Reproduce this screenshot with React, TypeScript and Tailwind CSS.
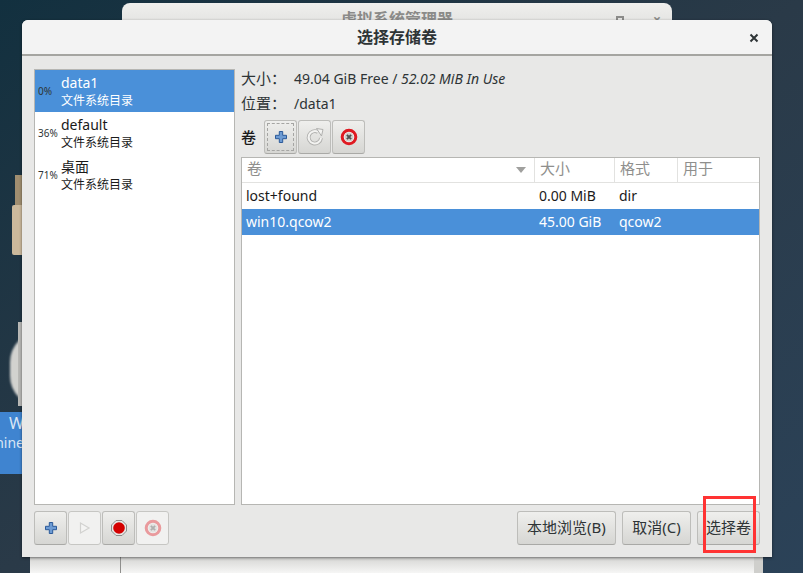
const font = "font-['Noto_Sans','Noto_Sans_CJK_SC',sans-serif]";

function PlusIcon() {
    return (
        <svg width="14" height="14" viewBox="0 0 14 14">
            <path
                d="M5.300 1.500h3.400v3.800h3.800v3.400H8.700v3.800H5.300V8.700H1.500V5.300h3.800z"
                fill="#6d9bd3"
                stroke="#2c5a99"
                strokeWidth="1"
                strokeLinejoin="round"
            />
        </svg>
    );
}

function RefreshIcon() {
    return (
        <svg width="20" height="20" viewBox="0 0 20 20">
            <path d="M16 11a6.200 6.200 0 1 1-3-6" fill="none" stroke="#b0b0ae" strokeWidth="3.800" />
            <path d="M16 11a6.200 6.200 0 1 1-3-6" fill="none" stroke="#f3f3f1" strokeWidth="2" />
            <path d="M11.500 1.500l6.500 1-1.500 6.500z" fill="#f3f3f1" stroke="#b0b0ae" strokeWidth="1" strokeLinejoin="round" />
        </svg>
    );
}

function DeleteIcon({ faded }: { faded?: boolean }) {
    return (
        <svg width="18" height="18" viewBox="0 0 18 18" className={faded ? "opacity-40" : ""}>
            <circle cx="9" cy="9" r="6.800" fill="#f4f4f2" stroke="#df1a22" strokeWidth="3" />
            <circle cx="9" cy="9" r="4.500" fill="#cfcfcd" />
            <path d="M6.900 6.900l4.200 4.200M11.100 6.900l-4.200 4.200" stroke="#505050" strokeWidth="2" />
        </svg>
    );
}

function PlayIcon() {
    return (
        <svg width="12" height="14" viewBox="0 0 12 14">
            <path d="M1.500 2v10l8.500-5z" fill="#f4f4f3" stroke="#d2d2d0" strokeWidth="1.200" />
        </svg>
    );
}

function RecordIcon() {
    return (
        <svg width="16" height="16" viewBox="0 0 16 16">
            <path
                d="M5 .5h6L15.500 5v6L11 15.500H5L.5 11V5z"
                fill="#e8e8e6"
                stroke="#8c8c8a"
                strokeWidth="1"
            />
            <circle cx="8" cy="8" r="5.800" fill="#d40000" />
        </svg>
    );
}

function IconButton({
    children,
    disabled,
    focused,
}: {
    children: React.ReactNode;
    disabled?: boolean;
    focused?: boolean;
}) {
    return (
        <div
            className={`relative flex h-[34px] w-[33px] items-center justify-center rounded-[3px] border ${
                disabled
                    ? "border-[#c6c6c3] bg-[#f1f1f0]"
                    : "border-[#bdbdba] border-b-[#a9a9a6] bg-gradient-to-b from-[#efefed] to-[#d6d6d3]"
            }`}
        >
            {focused && <div className="absolute inset-[2px] border border-dashed border-[#a5a5a3]" />}
            {children}
        </div>
    );
}

function TextButton({ label, width }: { label: string; width: string }) {
    return (
        <div
            className={`flex h-[34px] items-center justify-center rounded-[3px] border border-[#bdbdba] border-b-[#a9a9a6] bg-gradient-to-b from-[#efefed] to-[#d6d6d3] pb-[2px] text-[15px] text-[#2e3436] ${width}`}
        >
            {label}
        </div>
    );
}

function PoolRow({
    percent,
    name,
    selected,
}: {
    percent: string;
    name: string;
    selected?: boolean;
}) {
    return (
        <div className={`flex h-[42px] items-center ${selected ? "bg-[#4a90d9] text-white" : "text-[#1a1a1a]"}`}>
            <div className="w-[26px] pl-[3px] text-[10px] text-[#2e3436]">{percent}</div>
            <div className="flex flex-col">
                <span className="text-[14px] leading-[18px]">{name}</span>
                <span className="pt-px text-[12px] leading-[16px]">文件系统目录</span>
            </div>
        </div>
    );
}

function HeaderCell({ label, width, arrow }: { label: string; width: string; arrow?: boolean }) {
    return (
        <div className={`flex items-center justify-between border-r border-[#e2e2e0] pb-[3px] pl-[5px] pr-[8px] text-[15px] text-[#8f8f8d] last:border-r-0 ${width}`}>
            <span>{label}</span>
            {arrow && <div className="mt-[3px] h-0 w-0 border-x-[5px] border-t-[6px] border-x-transparent border-t-[#a0a09e]" />}
        </div>
    );
}

function VolumeRow({
    name,
    size,
    format,
    selected,
}: {
    name: string;
    size: string;
    format: string;
    selected?: boolean;
}) {
    return (
        <div className={`flex h-[26px] items-center pb-[2px] text-[14px] ${selected ? "bg-[#4a90d9] text-white" : "text-[#1a1a1a]"}`}>
            <div className="w-[293px] pl-[4px]">{name}</div>
            <div className="w-[80px] pl-[4px]">{size}</div>
            <div className="w-[63px] pl-[4px]">{format}</div>
        </div>
    );
}

export default function App() {
    return (
        <div className={`relative h-[573px] w-[803px] overflow-hidden bg-gradient-to-br from-[#12303f] via-[#2a3a48] to-[#2b4258] ${font}`}>
            {/* bits of the desktop behind the dialog */}
            <div className="absolute left-[15px] top-[175px] h-[35px] w-[10px] bg-[#a08e70]" />
            <div className="absolute left-[12px] top-[205px] h-[50px] w-[12px] rounded-l-[2px] bg-[#cbb99c]" />
            <div className="absolute left-[10px] top-[332px] h-[74px] w-[60px] rounded-full bg-[#d2d2cf] blur-[1px]" />
            <div className="absolute left-[18px] top-[322px] h-[84px] w-[6px] bg-[#b9b9b6]" />
            <div className="absolute left-0 top-[412px] flex h-[62px] w-[24px] flex-col items-end overflow-hidden bg-[#3f84d0] pt-[2px] text-[14px] leading-[19px] text-[#d9e6f5]">
                <span className="text-[16px]">W</span>
                <span className="whitespace-nowrap">nine</span>
            </div>

            {/* window behind */}
            <div className="absolute left-[122px] top-[3px] h-[60px] w-[550px] rounded-t-[8px] bg-gradient-to-b from-[#efefed] to-[#cfcfcd]">
                <div className="pt-[4px] text-center text-[16px] font-bold text-[#8b8b89]">虚拟系统管理器</div>
                <div className="absolute right-[11px] top-[6px] text-[14px] font-bold text-[#8b8b89]">×</div>
                <div className="absolute right-[48px] top-[13px] h-[8px] w-[8px] border-2 border-[#8b8b89]" />
            </div>
            <div className="absolute left-[30px] top-[557px] flex h-[16px] w-[733px] bg-[#f6f6f5]">
                <div className="w-[91px] border-r border-[#8f8f8d] bg-gradient-to-b from-[#d5d5d3] to-[#f6f6f5]" />
                <div className="flex-1 bg-gradient-to-b from-[#d5d5d3] to-[#f6f6f5]" />
                <div className="w-[9px] bg-[#cfcfcc]" />
            </div>

            {/* dialog */}
            <div className="absolute left-[22px] top-[20px] flex h-[537px] w-[750px] flex-col overflow-hidden rounded-t-[6px] bg-[#e8e8e7] shadow-[0_1px_3px_rgba(0,0,0,0.5)]">
                <div className="relative flex h-[36px] items-center justify-center border-b-2 border-[#a5a5a1] bg-[#f3f3f3] text-[16px] font-bold text-[#2e3436]">
                    选择存储卷
                    <svg className="absolute right-[13px] top-[13px]" width="10" height="10" viewBox="0 0 10 10">
                        <path d="M1.500 1.500l7 7M8.500 1.500l-7 7" stroke="#2e3436" strokeWidth="2" />
                    </svg>
                </div>
                <div className="flex flex-1 flex-col px-[12px] pt-[13px]">
                    <div className="flex gap-[6px]">
                        <div className="h-[436px] w-[201px] border border-[#b6b6b3] bg-white">
                            <PoolRow percent="0%" name="data1" selected />
                            <PoolRow percent="36%" name="default" />
                            <PoolRow percent="71%" name="桌面" />
                        </div>
                        <div className="flex h-[436px] flex-1 flex-col text-[14px] text-[#2e3436]">
                            <div className="flex h-[19px] items-center">
                                <span className="w-[53px] text-[15px]">大小：</span>
                                <span>
                                    49.04 GiB Free / <i>52.02 MiB In Use</i>
                                </span>
                            </div>
                            <div className="mt-[6px] flex h-[19px] items-center">
                                <span className="w-[53px] text-[15px]">位置：</span>
                                <span>/data1</span>
                            </div>
                            <div className="mt-[7px] flex items-center gap-px">
                                <span className="w-[22px] text-[15px] font-medium text-[#1a1a1a]">卷</span>
                                <IconButton focused>
                                    <PlusIcon />
                                </IconButton>
                                <IconButton>
                                    <RefreshIcon />
                                </IconButton>
                                <IconButton>
                                    <DeleteIcon />
                                </IconButton>
                            </div>
                            <div className="mt-[3px] flex flex-1 flex-col border border-[#b6b6b3] bg-white">
                                <div className="flex h-[25px] border-b border-[#e2e2e0]">
                                    <HeaderCell label="卷" width="w-[293px]" arrow />
                                    <HeaderCell label="大小" width="w-[80px]" />
                                    <HeaderCell label="格式" width="w-[63px]" />
                                    <HeaderCell label="用于" width="flex-1" />
                                </div>
                                <VolumeRow name="lost+found" size="0.00 MiB" format="dir" />
                                <VolumeRow name="win10.qcow2" size="45.00 GiB" format="qcow2" selected />
                            </div>
                        </div>
                    </div>
                    <div className="mt-[6px] flex items-center justify-between">
                        <div className="flex gap-px">
                            <IconButton>
                                <PlusIcon />
                            </IconButton>
                            <IconButton disabled>
                                <PlayIcon />
                            </IconButton>
                            <IconButton>
                                <RecordIcon />
                            </IconButton>
                            <IconButton disabled>
                                <DeleteIcon faded />
                            </IconButton>
                        </div>
                        <div className="flex gap-[6px]">
                            <TextButton label="本地浏览(B)" width="w-[99px]" />
                            <TextButton label="取消(C)" width="w-[69px]" />
                            <TextButton label="选择卷" width="w-[63px]" />
                        </div>
                    </div>
                </div>
            </div>

            {/* red annotation drawn on the screenshot */}
            <div className="absolute left-[703px] top-[496px] h-[57px] w-[53px] border-[3px] border-[#ff3333]" />
        </div>
    );
}
